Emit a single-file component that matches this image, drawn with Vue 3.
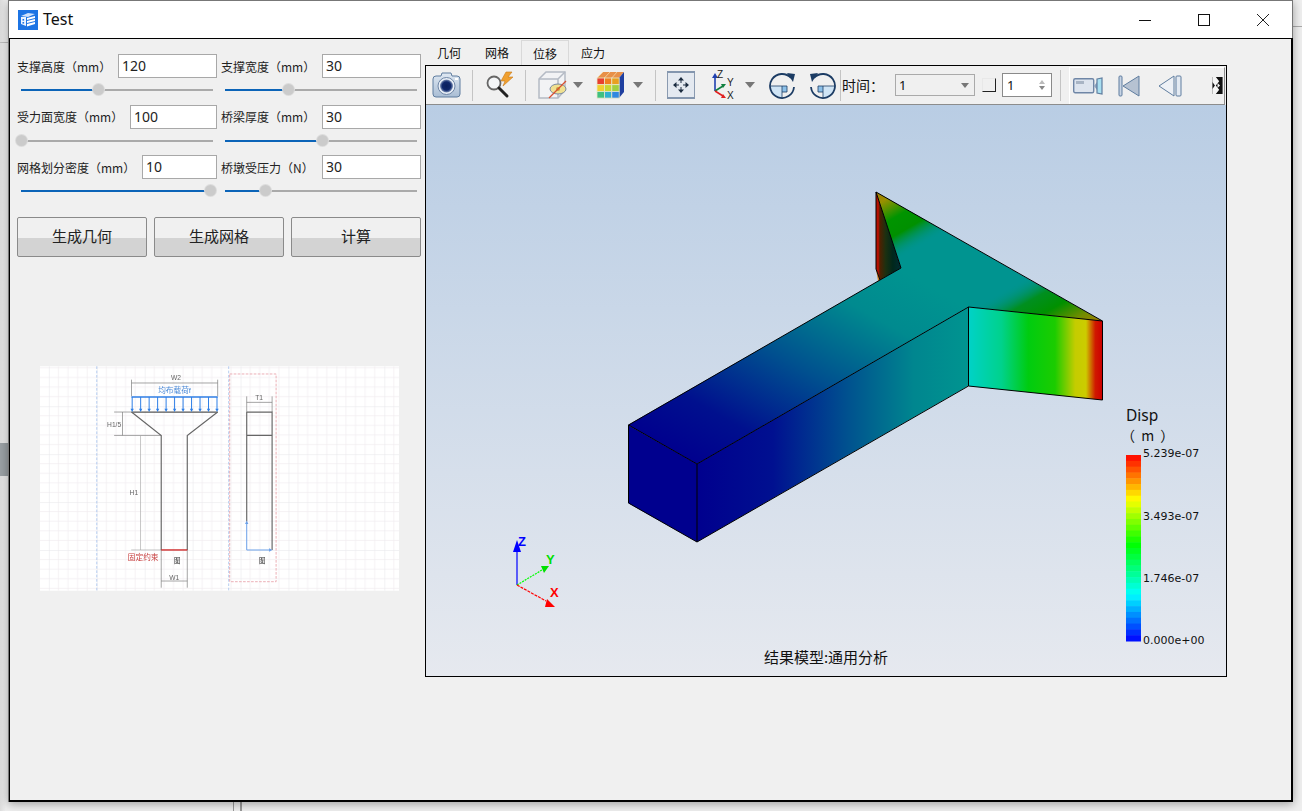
<script setup>
const fields = [
  { label: '支撑高度（mm）', value: '120', width: 99, pos: 40 },
  { label: '支撑宽度（mm）', value: '30', width: 99, pos: 33 },
  { label: '受力面宽度（mm）', value: '100', width: 87, pos: 0 },
  { label: '桥梁厚度（mm）', value: '30', width: 99, pos: 50.5 },
  { label: '网格划分密度（mm）', value: '10', width: 75, pos: 98.4 },
  { label: '桥墩受压力（N）', value: '30', width: 99, pos: 21 }
]

const actions = ['生成几何', '生成网格', '计算']
const tabs = ['几何', '网格', '位移', '应力']

// legend colour bands, top is max
function ramp(t) {
  const stops = [[0, 0, 0, 255], [0.25, 0, 255, 255], [0.52, 0, 255, 0], [0.76, 255, 255, 0], [1, 255, 0, 0]]
  for (let i = 1; i < stops.length; i++) {
    if (t <= stops[i][0]) {
      const a = stops[i - 1]
      const b = stops[i]
      const k = (t - a[0]) / (b[0] - a[0])
      return `rgb(${Math.round(a[1] + (b[1] - a[1]) * k)},${Math.round(a[2] + (b[2] - a[2]) * k)},${Math.round(a[3] + (b[3] - a[3]) * k)})`
    }
  }
  return 'rgb(255,0,0)'
}
const bandCount = 32
const bandH = 186 / bandCount
const bands = Array.from({ length: bandCount }, (_, i) => ({
  y: 455 + i * bandH,
  fill: ramp(1 - (i + 0.5) / bandCount)
}))

const ticks = [
  { text: '5.239e-07', y: 457 },
  { text: '3.493e-07', y: 520 },
  { text: '1.746e-07', y: 582 },
  { text: '0.000e+00', y: 644 }
]

const loadArrows = Array.from({ length: 11 }, (_, i) => 306 + i * 25.4)
const cubeColors = ['#e84030', '#f08020', '#e8a020', '#f0d030', '#c8d830', '#a0d040', '#40c080', '#30b0d0', '#3088e0']
</script>

<template>
  <div class="page">
    <div class="desk-band"></div>
    <div class="desk-line-left"></div>
    <div class="desk-line-right"></div>
    <div class="desk-tick one"></div>
    <div class="desk-tick two"></div>

    <div class="window">
      <div class="titlebar">
        <svg class="app-icon" width="20" height="20" viewBox="0 0 20 20">
          <rect width="20" height="20" fill="#1c74e4" />
          <path d="M3 6 L10 3 L17 4 L10 7 Z" fill="#cfe2fb" />
          <path d="M3 7 L8 7 V16 L3 14 Z" fill="#eaf3ff" />
          <rect x="4.5" y="9" width="1.6" height="1.6" fill="#1c74e4" />
          <rect x="4.5" y="12" width="1.6" height="1.6" fill="#1c74e4" />
          <path d="M9 8 L17 6 V8 L9 10 Z M9 11 L17 9 V11 L9 13 Z M9 14 L17 12 V14 L9 16.5 Z" fill="#fff" />
        </svg>
        <span class="app-title">Test</span>
        <div class="controls">
          <div class="ctl"><svg width="12" height="12" viewBox="0 0 12 12"><path d="M0 6.5 H12" stroke="#111" fill="none" /></svg></div>
          <div class="ctl"><svg width="12" height="12" viewBox="0 0 12 12"><rect x=".5" y=".5" width="11" height="11" stroke="#111" fill="none" /></svg></div>
          <div class="ctl"><svg width="12" height="12" viewBox="0 0 12 12"><path d="M0 0 L12 12 M12 0 L0 12" stroke="#222" fill="none" /></svg></div>
        </div>
      </div>

      <div class="client">
        <div class="left">
          <div class="form">
            <div v-for="f in fields" :key="f.label" class="cell">
              <div class="field-row">
                <label class="field-label">{{ f.label }}</label>
                <div class="field-input" :style="{ width: f.width + 'px' }">{{ f.value }}</div>
              </div>
              <div class="slider">
                <div class="slider-fill" :style="{ width: f.pos + '%' }"></div>
                <div class="slider-thumb" :style="{ left: f.pos + '%' }"></div>
              </div>
            </div>
          </div>

          <div class="actions">
            <button v-for="a in actions" :key="a" class="action">{{ a }}</button>
          </div>

          <svg class="diagram" width="359" height="225" viewBox="30 20 1075 672">
            <defs>
              <pattern id="grid" x="56.5" y="-4" width="143.5" height="143.5" patternUnits="userSpaceOnUse">
                <path d="M28.7 0V143.5 M57.4 0V143.5 M86.1 0V143.5 M114.8 0V143.5 M0 28.7H143.5 M0 57.4H143.5 M0 86.1H143.5 M0 114.8H143.5" stroke="#f0ecee" stroke-width="2" fill="none" />
                <path d="M0 0V143.5 M0 0H143.5" stroke="#e6e6ea" stroke-width="3" fill="none" />
              </pattern>
            </defs>
            <rect x="30" y="20" width="1075" height="672" fill="#fff" />
            <rect x="30" y="20" width="1075" height="672" fill="url(#grid)" />
            <path d="M200 20V692 M595 20V692" stroke="#a8c4ee" stroke-width="2.5" stroke-dasharray="8 5" fill="none" />
            <rect x="598" y="43" width="139" height="622" stroke="#e8a0a8" stroke-width="2.5" stroke-dasharray="8 4" fill="none" />

            <g stroke="#777" stroke-width="2" fill="none">
              <path d="M304 60V110 M562 60V110 M304 70H562" />
              <path d="M252 157H304 M252 227H393 M277 157V227" />
              <path d="M331 227V570 M303 570H393" stroke="#aaa" />
              <path d="M393 570V683 M471 570V683 M393 663H471" />
              <path d="M649 110V157 M725 110V157 M649 128H725" />
            </g>
            <g stroke="#666" stroke-width="3.5" fill="none">
              <path d="M304 157H562" stroke="#555" />
              <path d="M304 157L393 227V570 M562 157L471 227V570" />
              <path d="M649 157H725V570 M649 227H725 M649 157V485" />
            </g>
            <path d="M393 570H471" stroke="#cc2020" stroke-width="4" fill="none" />
            <path d="M304 112H562" stroke="#2f7fe6" stroke-width="4" fill="none" />
            <g v-for="x in loadArrows" :key="x">
              <path :d="`M${x} 112V150`" stroke="#2f7fe6" stroke-width="3" fill="none" />
              <path :d="`M${x - 5} 147H${x + 5}L${x} 157Z`" fill="#2f7fe6" />
            </g>
            <path d="M649 570V490 M649 570H718" stroke="#6a9fe8" stroke-width="3" fill="none" />
            <path d="M644 492L649 482L654 492Z M716 565L726 570L716 575Z" fill="#6a9fe8" />

            <g class="dia-text" font-size="20" fill="#666" text-anchor="middle">
              <text x="437" y="62">W2</text>
              <text x="686" y="120">T1</text>
              <text x="252" y="202">H1/5</text>
              <text x="311" y="404">H1</text>
              <text x="432" y="659">W1</text>
            </g>
            <text class="dia-text" x="433" y="100" font-size="23" fill="#4a8ad8" text-anchor="middle">均布载荷f</text>
            <text class="dia-text" x="339" y="601" font-size="23" fill="#c84040" text-anchor="middle">固定约束</text>
            <text class="dia-text" x="431" y="608" font-size="19" fill="#222">图</text>
            <text class="dia-text" x="686" y="608" font-size="19" fill="#222">图</text>
          </svg>
        </div>

        <div class="right">
          <div class="tabs">
            <div v-for="t in tabs" :key="t" class="tab" :class="{ active: t === '位移' }">{{ t }}</div>
          </div>

          <div class="viewer">
            <div class="toolbar">
              <svg class="tool i-camera" width="29" height="26" viewBox="0 0 29 26">
                <defs>
                  <linearGradient id="camBody" x1="0" y1="0" x2="0" y2="1"><stop offset="0" stop-color="#dfe8f2" /><stop offset="1" stop-color="#a9bdd4" /></linearGradient>
                  <radialGradient id="camLens"><stop offset="0" stop-color="#0a1f5c" /><stop offset=".65" stop-color="#10286c" /><stop offset="1" stop-color="#7f93b8" /></radialGradient>
                </defs>
                <path d="M4 4h5l1-3h9l1 3h5a3 3 0 0 1 3 3v15a3 3 0 0 1-3 3H4a3 3 0 0 1-3-3V7a3 3 0 0 1 3-3z" fill="url(#camBody)" stroke="#5f7d9f" />
                <circle cx="14.5" cy="14" r="8.5" fill="#e8eef6" stroke="#6f86a6" />
                <circle cx="14.5" cy="14" r="6.5" fill="url(#camLens)" />
                <rect x="23" y="6" width="3" height="2" fill="#fff" />
              </svg>
              <span class="sep s1"></span>
              <svg class="tool i-search" width="30" height="28" viewBox="0 0 30 28">
                <circle cx="9" cy="12" r="6.5" fill="#f4f6f8" stroke="#666" stroke-width="1.8" />
                <path d="M14 17 L22 25" stroke="#222" stroke-width="3" stroke-linecap="round" />
                <path d="M21 1 L16 10 H20 L18 15 L28 6 H23 L27 1 Z" fill="#f0a030" stroke="#c87818" stroke-width=".6" />
              </svg>
              <span class="sep s2"></span>
              <svg class="tool i-box" width="29" height="30" viewBox="0 0 29 30">
                <path d="M1 9 L8 2 H27 V20 L20 28 H1 Z" fill="#f2f3f5" stroke="#b4bac4" stroke-width="1.5" />
                <path d="M1 9 H20 V28 M20 9 L27 2" fill="none" stroke="#b4bac4" stroke-width="1.5" />
                <ellipse cx="20" cy="19" rx="8" ry="5" fill="#f0e090" stroke="#7a8aa0" />
                <circle cx="20" cy="19" r="2" fill="#c8a040" />
                <path d="M11 28 L28 11" stroke="#d85030" stroke-width="1.2" />
              </svg>
              <span class="caret c1"></span>
              <svg class="tool i-cube" width="29" height="28" viewBox="0 0 29 28">
                <path d="M1 7 L7 1 H28 L23 7 Z" fill="#e89048" />
                <path d="M7 1 L1 7 M14 1 L8.4 7 M21 1 L15.8 7" stroke="#f4d8a8" stroke-width=".8" />
                <path d="M23 7 L28 1 V21 L23 27 Z" fill="#1f3f9f" />
                <g stroke="#e8e8c8" stroke-width=".8">
                  <rect v-for="(c, i) in cubeColors" :key="i" :x="1 + (i % 3) * 7.4" :y="7 + Math.floor(i / 3) * 6.7" width="7.4" height="6.7" :fill="c" />
                </g>
              </svg>
              <span class="caret c2"></span>
              <span class="sep s3"></span>
              <svg class="tool i-fit" width="28" height="28" viewBox="0 0 28 28">
                <rect x=".5" y=".5" width="27" height="27" fill="#e4e9f0" stroke="#8a9ab0" />
                <rect x="0" y="0" width="28" height="2" fill="#8496ae" />
                <rect x="0" y="26" width="28" height="2" fill="#8496ae" />
                <path d="M14 9 V12 M14 16 V19 M9 14 H12 M16 14 H19" stroke="#1c2c40" />
                <path d="M14 6 l-3 3.5 h6 Z M14 22 l-3-3.5 h6 Z M6 14 l3.5-3 v6 Z M22 14 l-3.5-3 v6 Z" fill="#1c2c40" />
              </svg>
              <svg class="tool i-axes" width="26" height="32" viewBox="0 -1 26 32">
                <path d="M5 21 V7" stroke="#2040b0" stroke-width="1.6" />
                <path d="M5 3 l-3 5 h6 Z" fill="#2040b0" />
                <path d="M5 21 L13 16" stroke="#108040" stroke-width="1.6" />
                <path d="M16 14 l-5 0 l2 4 Z" fill="#108040" />
                <path d="M5 21 L13 26" stroke="#e02020" stroke-width="1.6" />
                <path d="M16 28 l-5 0 l2 -4 Z" fill="#e02020" />
                <text class="axis-mini" x="7" y="8">Z</text>
                <text class="axis-mini" x="17" y="16">Y</text>
                <text class="axis-mini" x="17" y="29">X</text>
              </svg>
              <span class="caret c3"></span>
              <svg class="tool i-rot1" width="27" height="27" viewBox="0 0 27 27">
                <path d="M13 14 H2 A12 12 0 0 0 13 26 Z" fill="#cfe4f5" />
                <path d="M13 14 H18 V20 H13Z" fill="#8cc0e8" />
                <path d="M2 14 H13 V26 M13 14 H18 V20 H13" stroke="#1c3c64" stroke-width=".8" fill="none" />
                <path d="M22 6 A12 12 0 1 0 25 15" fill="none" stroke="#1c3c64" stroke-width="1.8" />
                <path d="M18 1 L26 2 L24 10 Z" fill="#1c3c64" />
              </svg>
              <svg class="tool i-rot2" width="27" height="27" viewBox="0 0 27 27">
                <path d="M14 14 H25 A12 12 0 0 1 14 26 Z" fill="#cfe4f5" />
                <path d="M14 14 H9 V20 H14Z" fill="#8cc0e8" />
                <path d="M25 14 H14 V26 M14 14 H9 V20 H14" stroke="#1c3c64" stroke-width=".8" fill="none" />
                <path d="M5 6 A12 12 0 1 1 2 15" fill="none" stroke="#1c3c64" stroke-width="1.8" />
                <path d="M9 1 L1 2 L3 10 Z" fill="#1c3c64" />
              </svg>
              <span class="sep s4"></span>
              <span class="time-label">时间：</span>
              <div class="combo"><span>1</span><i class="combo-arrow"></i></div>
              <div class="check"></div>
              <div class="spin">
                <span>1</span>
                <div class="spin-arrows"><i class="up"></i><i class="down"></i></div>
              </div>
              <span class="sep s5"></span>
              <div class="playback">
                <svg class="tool i-video" width="30" height="18" viewBox="0 0 30 18">
                  <rect x=".7" y="1.7" width="20" height="14" rx="1.5" fill="#dde4ee" stroke="#6f86a6" stroke-width="1.4" />
                  <rect x="3" y="4" width="8" height="3" fill="#a8b4c4" />
                  <path d="M21 9 L24 5 V13 Z" fill="#8fa4c0" />
                  <path d="M24 2 L29 1 V17 L24 16 Z" fill="#a9dff0" stroke="#5f7d9f" stroke-width="1.2" />
                </svg>
                <svg class="tool i-first" width="22" height="22" viewBox="0 0 22 22">
                  <rect x="1" y="1" width="3" height="20" rx="1" fill="#c8d4e4" stroke="#5f7d9f" />
                  <path d="M21 1 V21 L5 11 Z" fill="#b6c2d2" stroke="#5f7d9f" />
                </svg>
                <svg class="tool i-prev" width="24" height="22" viewBox="0 0 24 22">
                  <path d="M16 1 V21 L1 11 Z" fill="#eef1f6" stroke="#5f7d9f" />
                  <rect x="18" y="1" width="5" height="20" rx="1" fill="#e4eaf2" stroke="#5f7d9f" />
                </svg>
                <svg class="tool i-more" width="11" height="17" viewBox="0 0 12 20">
                  <rect width="12" height="20" fill="#111" />
                  <path d="M0 0 H4 L8 5 L4 10 L8 15 L4 20 H0 L0 14 L3 10 L0 6 Z" fill="#f4f4f4" />
                  <path d="M6 7 L9 10 L6 13 Z" fill="#f4f4f4" />
                </svg>
              </div>
            </div>

            <svg class="scene" width="800" height="571" viewBox="426 105 800 571">
              <defs>
                <linearGradient id="bg" x1="0" y1="0" x2="0" y2="1">
                  <stop offset="0" stop-color="#b9cde4" />
                  <stop offset="1" stop-color="#e6e9ef" />
                </linearGradient>
                <linearGradient id="topFace" gradientUnits="userSpaceOnUse" x1="662" y1="445" x2="795" y2="210">
                  <stop offset="0" stop-color="#00008e" />
                  <stop offset=".2" stop-color="#00108e" />
                  <stop offset=".5" stop-color="#00508f" />
                  <stop offset=".8" stop-color="#008a8f" />
                  <stop offset="1" stop-color="#009490" />
                </linearGradient>
                <linearGradient id="sideFace" gradientUnits="userSpaceOnUse" x1="697" y1="0" x2="968" y2="0">
                  <stop offset="0" stop-color="#00008e" />
                  <stop offset=".28" stop-color="#001090" />
                  <stop offset=".55" stop-color="#00508f" />
                  <stop offset=".8" stop-color="#00868f" />
                  <stop offset="1" stop-color="#009490" />
                </linearGradient>
                <linearGradient id="endFace" gradientUnits="userSpaceOnUse" x1="968" y1="0" x2="1102" y2="0">
                  <stop offset="0" stop-color="#00d2c8" />
                  <stop offset=".25" stop-color="#00d28c" />
                  <stop offset=".45" stop-color="#00cc10" />
                  <stop offset=".65" stop-color="#1ccc00" />
                  <stop offset=".8" stop-color="#c4cc00" />
                  <stop offset=".88" stop-color="#cccc00" />
                  <stop offset=".95" stop-color="#d01800" />
                  <stop offset="1" stop-color="#cc0000" />
                </linearGradient>
                <!-- wing tips: iso-lines run parallel to the beam -->
                <linearGradient id="wing" gradientUnits="userSpaceOnUse" x1="876" y1="192" x2="988" y2="387">
                  <stop offset="0" stop-color="#a87800" />
                  <stop offset=".05" stop-color="#9a9000" />
                  <stop offset=".14" stop-color="#009400" />
                  <stop offset=".21" stop-color="#009000" />
                  <stop offset=".31" stop-color="#009490" stop-opacity="0" />
                  <stop offset=".66" stop-color="#009490" stop-opacity="0" />
                  <stop offset=".76" stop-color="#008f20" />
                  <stop offset=".84" stop-color="#009000" />
                  <stop offset=".93" stop-color="#708c00" />
                  <stop offset="1" stop-color="#a88000" />
                </linearGradient>
                <linearGradient id="inner" gradientUnits="userSpaceOnUse" x1="876" y1="0" x2="900" y2="0">
                  <stop offset="0" stop-color="#c01000" />
                  <stop offset=".1" stop-color="#b01000" />
                  <stop offset=".16" stop-color="#502000" />
                  <stop offset=".4" stop-color="#1c3010" />
                  <stop offset=".7" stop-color="#00281c" />
                  <stop offset="1" stop-color="#002c30" />
                </linearGradient>
              </defs>
              <rect x="426" y="105" width="800" height="571" fill="url(#bg)" />

              <polygon points="628,425 880,280 901,268 876,192 1102,321 968,307 697,464" fill="url(#topFace)" />
              <polygon points="880,280 901,268 876,192 1102,321 968,307" fill="url(#wing)" />
              <polygon points="876,192 901,268 880,280 876,269" fill="url(#inner)" />
              <polygon points="876,269 880,280 878,281" fill="#d08020" />
              <polygon points="697,464 968,307 968,386 697,542" fill="url(#sideFace)" />
              <polygon points="968,307 1102,321 1102,400 968,386" fill="url(#endFace)" />
              <polygon points="628,425 697,464 697,542 628,503" fill="#00008e" />

              <g fill="none" stroke="#000" stroke-width="1">
                <path d="M628.5 425 L697 464 L968.5 307 L1102.5 321 L876 192 L901 268 L880 280 L628.5 425 Z" />
                <path d="M628.5 425 V503 L697 542 V464 M697 542 L968.5 386 V307 M968.5 386 L1102.5 400 V321" />
                <path d="M876 192 V269 L880 280" />
              </g>

              <path d="M517 585 V550" stroke="#0000ff" stroke-width="1.2" />
              <path d="M517 540 L513 552 H521 Z" fill="#0000ff" />
              <path d="M517 585 L542 570" stroke="#00ff00" stroke-width="1.2" stroke-dasharray="2 1" />
              <path d="M549 566 L541 566 L544 573 Z" fill="#00e000" />
              <path d="M517 585 L546 601" stroke="#ff0000" stroke-width="1.2" stroke-dasharray="3 1" />
              <path d="M555 607 L545 607 L547 599 Z" fill="#ff0000" />
              <text class="axis z" x="518" y="546">Z</text>
              <text class="axis y" x="546" y="564">Y</text>
              <text class="axis x" x="550" y="597">X</text>

              <text class="legend-title" x="1126" y="421">Disp</text>
              <text class="legend-unit" x="1121" y="441">（ m ）</text>
              <rect v-for="b in bands" :key="b.y" x="1126" :y="b.y" width="15" :height="bandH + 0.5" :fill="b.fill" />
              <text v-for="t in ticks" :key="t.text" class="legend-tick" x="1143" :y="t.y">{{ t.text }}</text>

              <text class="caption" x="826" y="663" text-anchor="middle">结果模型:通用分析</text>
            </svg>
          </div>
        </div>
      </div>
    </div>
  </div>
</template>

<style>
html, body { margin: 0; padding: 0; background: #ececec; overflow: hidden; }
</style>

<style scoped>
.page {
  position: relative;
  width: 1302px;
  height: 811px;
  padding-left: 8px;
  box-sizing: border-box;
  overflow: hidden;
  background: linear-gradient(90deg, #dcdcdc, #efefef 6px);
  font-family: "Noto Sans", "Noto Sans CJK SC", sans-serif;
  color: #111;
}
.desk-band { position: absolute; left: 0; top: 443px; width: 8px; height: 33px; background: #9ba1a5; }
.desk-line-left { position: absolute; left: 0; top: 42px; width: 8px; height: 1px; background: #bbb; }
.desk-line-right { position: absolute; right: 0; top: 26px; width: 9px; height: 1px; background: #aaa; }
.desk-tick { position: absolute; top: 802px; width: 1px; height: 9px; background: #999; }
.desk-tick.one { left: 233px; }
.desk-tick.two { left: 240px; width: 2px; }

.window {
  position: relative;
  width: 1285px;
  height: 802px;
  display: flex;
  flex-direction: column;
  background: #fff;
  border-top: 1px solid #777;
  border-right: 1px solid #777;
  border-left: 1px solid #777;
  box-sizing: border-box;
  box-shadow: 0 2px 9px rgba(0, 0, 0, 0.35);
}
.titlebar { height: 37px; display: flex; align-items: center; padding-left: 9px; flex: none; }
.app-title { margin: 0 0 1px 5px; font-size: 16px; color: #111; }
.controls { margin-left: auto; display: flex; }
.ctl { width: 59px; height: 37px; display: flex; align-items: center; justify-content: center; }

.client {
  flex: 1;
  display: flex;
  background: #f0f0f0;
  border: 1px solid #000;
  border-bottom-width: 2px;
  border-right-width: 2px;
  margin-right: -1px;
  min-height: 0;
}

.left { width: 404px; margin-left: 7px; padding-top: 15px; flex: none; }
.form { display: grid; grid-template-columns: 200px 200px; column-gap: 4px; grid-auto-rows: 50.5px; }
.field-row { display: flex; align-items: center; height: 24px; }
.field-label { flex: 1; font-size: 12px; white-space: nowrap; color: #222; font-family: "Noto Sans CJK SC", "Noto Sans", sans-serif; }
.field-input {
  height: 24px;
  box-sizing: border-box;
  border: 1px solid #a8a8a8;
  background: #fff;
  padding-left: 3px;
  font-size: 14px;
  line-height: 22px;
  color: #222;
}
.slider { position: relative; height: 2px; margin: 11px 4px 0; background: #aaa; }
.slider-fill { height: 100%; background: #0b64b8; }
.slider-thumb {
  position: absolute;
  top: -5px;
  width: 11px;
  height: 11px;
  margin-left: -5px;
  border-radius: 50%;
  background: #cbcbcb;
  box-shadow: 0 0 0 1px #dcdcdc;
}

.actions { display: flex; gap: 7px; margin-top: 11.5px; }
.action {
  width: 130px;
  height: 40px;
  box-sizing: border-box;
  padding: 0 0 3px;
  border: 1px solid #8a8a8a;
  border-radius: 2px;
  background: linear-gradient(#f0f0f0 0, #f0f0f0 52%, #d3d3d3 52%, #d3d3d3 100%);
  font-family: "Noto Sans CJK SC", sans-serif;
  font-size: 15px;
  color: #222;
}
.diagram { display: block; margin: 109px 0 0 23px; filter: blur(0.5px); }
.dia-text { font-family: "Liberation Sans", "Noto Sans CJK SC", sans-serif; }

.right { margin-left: 4px; width: 802px; flex: none; }
.tabs { display: flex; height: 25px; margin-top: 1px; align-items: flex-end; }
.tab {
  width: 48px;
  height: 25px;
  box-sizing: border-box;
  padding-left: 12px;
  font-family: "Noto Sans CJK SC", sans-serif;
  font-size: 12px;
  line-height: 26px;
  color: #111;
}
.tab.active { box-sizing: border-box; border: 1px solid #d9d9d9; border-bottom: 0; padding-left: 11px; }

.viewer { width: 802px; height: 612px; box-sizing: border-box; border: 1px solid #000; background: #f0f0f0; }
.toolbar {
  height: 39px;
  display: flex;
  align-items: center;
  border-bottom: 1px solid #8c8c8c;
  box-sizing: border-box;
  position: relative;
  width: 799px;
}
.tool { flex: none; display: block; }
.sep { flex: none; width: 1px; height: 31px; background: #c4c4c4; }
.caret { flex: none; width: 0; height: 0; border-left: 5.5px solid transparent; border-right: 5.5px solid transparent; border-top: 6px solid #777; }

.i-camera { margin-left: 6px; }
.s1 { margin-left: 11px; }
.i-search { margin-left: 12px; }
.s2 { margin-left: 10px; }
.i-box { margin-left: 12px; }
.c1 { margin-left: 6px; }
.i-cube { margin-left: 13px; }
.c2 { margin-left: 8px; }
.s3 { margin-left: 12px; }
.i-fit { margin-left: 11px; }
.i-axes { margin-left: 15px; }
.c3 { margin-left: 9px; }
.i-rot1 { margin-left: 14px; }
.i-rot2 { margin-left: 13px; }
.s4 { margin-left: 4px; }
.time-label { flex: none; margin-left: 1px; width: 53px; font-family: "Noto Sans CJK SC", sans-serif; font-size: 14px; color: #111; }
.combo {
  flex: none;
  width: 80px;
  height: 22px;
  box-sizing: border-box;
  border: 1px solid #aaa;
  display: flex;
  align-items: center;
  justify-content: space-between;
  padding: 0 4px 0 3px;
  font-size: 13px;
}
.combo-arrow { width: 0; height: 0; border-left: 4.5px solid transparent; border-right: 4.5px solid transparent; border-top: 5px solid #777; margin-right: 1px; }
.check { flex: none; width: 14px; height: 14px; margin-left: 7px; box-sizing: border-box; border-right: 1px solid #222; border-bottom: 1px solid #222; border-top: 1px solid #e8e8e8; border-left: 1px solid #e8e8e8; }
.spin {
  flex: none;
  width: 50px;
  height: 24px;
  margin-left: 6px;
  box-sizing: border-box;
  border: 1px solid #8a8a8a;
  background: #fff;
  display: flex;
  align-items: center;
  justify-content: space-between;
  padding: 0 6px 0 4px;
  font-size: 13px;
}
.spin-arrows { display: flex; flex-direction: column; gap: 2px; }
.spin-arrows i { width: 0; height: 0; border-left: 3.5px solid transparent; border-right: 3.5px solid transparent; }
.spin-arrows .up { border-bottom: 4px solid #bbb; }
.spin-arrows .down { border-top: 4px solid #888; }
.s5 { margin-left: 8px; }
.playback {
  flex: none;
  margin-left: 8px;
  width: 156px;
  height: 37px;
  box-sizing: border-box;
  border-top: 1px solid #fff;
  border-left: 1px solid #fff;
  border-right: 1px solid #8c8c8c;
  display: flex;
  align-items: center;
}
.i-video { margin-left: 3px; }
.i-first { margin-left: 15px; }
.i-prev { margin-left: 18px; }
.i-more { margin-left: 30px; }
.axis-mini { font-family: "Liberation Sans", sans-serif; font-size: 10px; fill: #222; }

.scene { display: block; }
.axis { font-family: "Liberation Sans", sans-serif; font-weight: 700; font-size: 13px; }
.axis.z { fill: #0000ff; }
.axis.y { fill: #00e000; }
.axis.x { fill: #ff0000; }
.legend-title { font-family: "Noto Sans", sans-serif; font-size: 15.5px; fill: #111; }
.legend-unit { font-family: "Noto Sans CJK SC", sans-serif; font-size: 14px; word-spacing: 3px; fill: #111; }
.legend-tick { font-family: "DejaVu Sans", sans-serif; font-size: 11px; fill: #111; }
.caption { font-family: "Noto Sans CJK SC", sans-serif; font-size: 15px; fill: #111; }
</style>
